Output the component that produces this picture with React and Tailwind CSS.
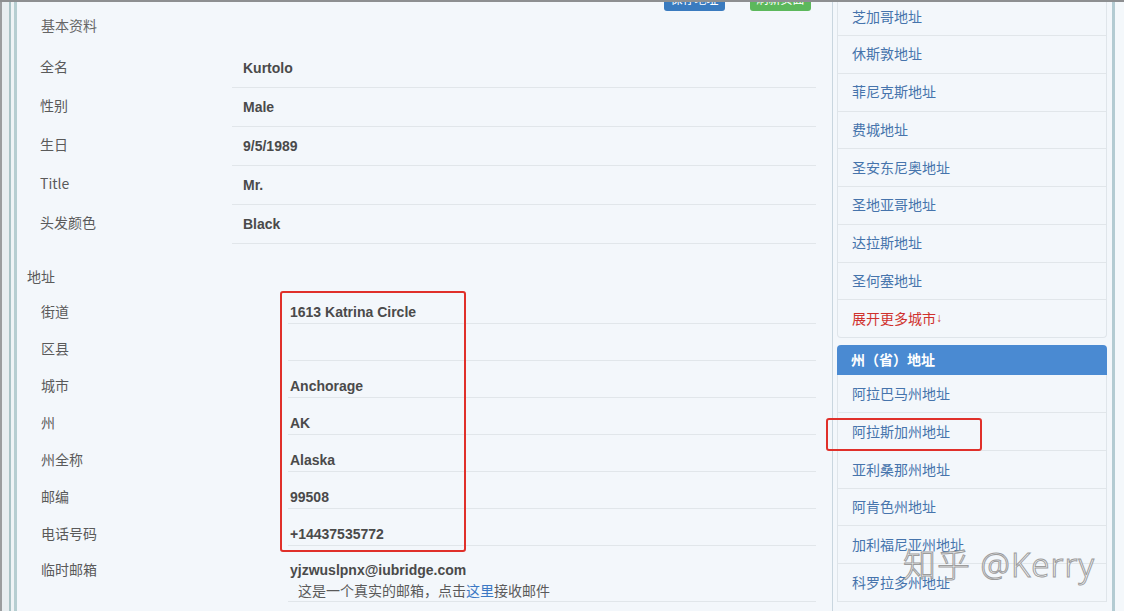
export default function App() {
  const basic = [
    ["全名", "Kurtolo"],
    ["性别", "Male"],
    ["生日", "9/5/1989"],
    ["Title", "Mr."],
    ["头发颜色", "Black"],
  ];
  const addr = [
    ["街道", "1613 Katrina Circle"],
    ["区县", ""],
    ["城市", "Anchorage"],
    ["州", "AK"],
    ["州全称", "Alaska"],
    ["邮编", "99508"],
    ["电话号码", "+14437535772"],
  ];
  const cities = ["休斯敦地址", "菲尼克斯地址", "费城地址", "圣安东尼奥地址", "圣地亚哥地址", "达拉斯地址", "圣何塞地址"];
  const states = ["阿拉巴马州地址", "阿拉斯加州地址", "亚利桑那州地址", "阿肯色州地址", "加利福尼亚州地址", "科罗拉多州地址"];

  const cjk = "font-['Noto_Sans_CJK_SC','Liberation_Sans',sans-serif]";

  return (
    <div className="relative w-[1124px] h-[611px] overflow-hidden bg-[#f3f7fb] border-t-2 border-[#8d8f91] flex font-['Liberation_Sans','Noto_Sans_CJK_SC',sans-serif] text-[14px]">
      {/* left edge strip */}
      <div className="flex w-[17px] shrink-0">
        <div className="w-[2px] bg-[#9b9d9f]" />
        <div className="w-[7px] bg-[#e8eef1]" />
        <div className="w-[2px] bg-[#a9c3c6]" />
        <div className="w-[3px] bg-[#eef3f5]" />
        <div className="w-[3px] bg-[#b6ced1]" />
      </div>

      {/* main panel */}
      <div className="w-[816px] shrink-0 border-r border-[#c9d6df] flex flex-col pl-[23px] pr-[16px]">
        <div className="h-[9px] flex justify-end gap-[25px] pr-[5px]">
          <div className={`h-[24px] mt-[-15px] w-[61px] rounded-[3px] bg-[#3a7bbf] text-white text-[12px] flex items-center justify-center ${cjk}`}>保存地址</div>
          <div className={`h-[24px] mt-[-15px] w-[61px] rounded-[3px] bg-[#5cb85c] text-white text-[12px] flex items-center justify-center ${cjk}`}>刷新页面</div>
        </div>
        <div className={`leading-[28px] pl-[1px] pb-[1px] text-[#666] ${cjk}`}>基本资料</div>
        <div className="mt-[9px] flex flex-col">
          {basic.map(([k, v]) => (
            <div key={k} className="flex h-[39px]">
              <div className={`w-[192px] flex items-center text-[#5a5a5a] pb-[4px] ${cjk}`}>{k}</div>
              <div className="flex-1 border-b border-[#e1e6ea] flex items-center pl-[11px] font-bold text-[#4a4a4a]">{v}</div>
            </div>
          ))}
        </div>
        <div className={`mt-[22px] h-[20px] leading-[20px] ml-[-13px] text-[#5a5a5a] ${cjk}`}>地址</div>
        <div className="mt-[1px] flex flex-col">
          {addr.map(([k, v]) => (
            <div key={k} className="flex h-[37px]">
              <div className={`w-[248px] pl-[1px] flex items-end pb-[4px] leading-[18px] text-[#5a5a5a] ${cjk}`}>{k}</div>
              <div className="flex-1 border-b border-[#e1e6ea] flex items-end pb-[2px] leading-[18px] pl-[2px] font-bold text-[#4a4a4a]">{v}</div>
            </div>
          ))}
          <div className="flex h-[56px]">
            <div className={`w-[248px] pl-[1px] pt-[13px] leading-[20px] text-[#5a5a5a] ${cjk}`}>临时邮箱</div>
            <div className="flex-1 border-b border-[#e1e6ea] pt-[14px] pl-[2px] leading-[20px]">
              <div className="font-bold text-[#4a4a4a]">yjzwuslpnx@iubridge.com</div>
              <div className={`pl-[8px] text-[#5a5a5a] ${cjk}`}>
                这是一个真实的邮箱，点击<span className="text-[#3b78c4]">这里</span>接收邮件
              </div>
            </div>
          </div>
        </div>
      </div>

      {/* sidebar */}
      <div className={`w-[270px] shrink-0 ml-[4px] flex flex-col ${cjk}`}>
        <div className="border-x border-b border-[#dfe5ea] rounded-b-[4px] flex flex-col">
          <div className="h-[34px] pb-[5px] border-b border-[#e1e6ea] flex items-center pl-[14px] text-[#4674ac]">芝加哥地址</div>
          {cities.map((c) => (
            <div key={c} className="h-[37.75px] shrink-0 pb-[1px] border-b border-[#e1e6ea] flex items-center pl-[14px] text-[#4674ac]">{c}</div>
          ))}
          <div className="h-[37px] pb-[1px] flex items-center pl-[14px] text-[#d0312d]">
            展开更多城市<span className="text-[12px] font-['Liberation_Sans',sans-serif]">↓</span>
          </div>
        </div>
        <div className="mt-[7px] h-[30px] pb-[1px] rounded-t-[4px] bg-[#4a8ad2] flex items-center pl-[14px] text-white font-bold">州（省）地址</div>
        <div className="border-x border-[#dfe5ea] flex flex-col">
          {states.map((s) => (
            <div key={s} className="h-[37.75px] shrink-0 border-b border-[#e1e6ea] flex items-center pl-[14px] text-[#4674ac]">{s}</div>
          ))}
        </div>
      </div>

      {/* right edge */}
      <div className="w-[5px] shrink-0" />
      <div className="w-[3px] shrink-0 bg-[#b3cbd2]" />
      <div className="flex-1 bg-[#f4f8fb]" />

      {/* annotations */}
      <div className="absolute left-[280px] top-[289px] w-[186px] h-[261px] border-2 border-[#e0302a] rounded-[3px]" />
      <div className="absolute left-[826px] top-[416px] w-[156px] h-[33px] border-2 border-[#e0302a] rounded-[3px]" />

      {/* watermark */}
      <div className="absolute left-[903px] top-[541px] text-[33px] leading-[44px] font-['Noto_Sans','Noto_Sans_CJK_SC',sans-serif] font-light text-[rgba(255,255,255,0.55)] [-webkit-text-stroke:1px_#9c9c9c] tracking-[1px]">
        知乎 @Kerry
      </div>
    </div>
  );
}
